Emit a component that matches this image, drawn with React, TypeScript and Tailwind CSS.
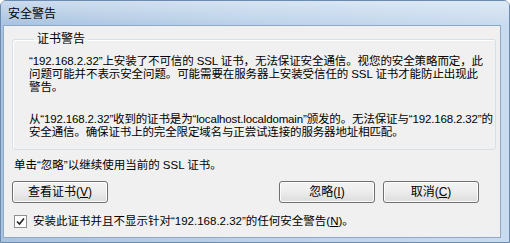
import React from 'react';

const font = { fontFamily: '"Liberation Sans", "Noto Sans CJK SC", sans-serif' };

const Btn = ({ children, className = '' }: { children: React.ReactNode; className?: string }) => (
  <button
    type="button"
    className={`h-[22px] w-[96px] border border-[#707070] rounded-[3px] bg-gradient-to-b from-[#f4f4f4] via-[#ececec] to-[#dcdcdc] text-[12px] text-black leading-none shadow-[inset_0_0_0_1px_#fcfcfc] ${className}`}
  >
    {children}
  </button>
);

export default function App() {
  return (
    <div className="w-[510px] h-[243px] overflow-hidden text-black" style={font}>
      <div className="w-full h-full flex flex-col rounded-t-[6px] border border-[#6b8bb0] bg-gradient-to-r from-[#a9c3e1] via-[#bcd2ea] to-[#c9dbef]">
        {/* title bar */}
        <div className="h-[24px] shrink-0 flex items-center pl-[7px] pt-[2px] bg-gradient-to-b from-white/40 to-transparent">
          <span className="text-[12px] leading-none">安全警告</span>
        </div>
        {/* client area */}
        <div className="flex-1 min-w-0 flex ml-[2px] mr-[8px] mb-[4px] border border-[#8ea8c6] bg-[#f0f0f0]">
          <div className="flex-1 min-w-0 flex flex-col pl-[8px] pr-[4px] pt-[6px]">
            <fieldset className="min-w-0 border border-[#d5dfe5] rounded-[3px] pl-[16px] pr-[4px] pt-[9px] h-[118px] shadow-[inset_1px_1px_0_#fff]">
              <legend className="px-[3px] ml-[5px] text-[12px] leading-[14px]">证书警告</legend>
              <p className="text-[11.5px] leading-[13px] whitespace-pre tracking-[-0.1px]">
                {'“192.168.2.32”上安装了不可信的 SSL 证书，无法保证安全通信。视您的安全策略而定，此\n问题可能并不表示安全问题。可能需要在服务器上安装受信任的 SSL 证书才能防止出现此\n警告。'}
              </p>
              <p className="mt-[19px] text-[11.5px] leading-[13px] whitespace-pre tracking-[-0.15px]">
                {'从“192.168.2.32”收到的证书是为“localhost.localdomain”颁发的。无法保证与“192.168.2.32”的\n安全通信。确保证书上的完全限定域名与正尝试连接的服务器地址相匹配。'}
              </p>
            </fieldset>
            <p className="mt-[9px] ml-[2px] text-[11.5px] leading-[13px]">单击“忽略”以继续使用当前的 SSL 证书。</p>
            <div className="mt-[9px] flex items-center">
              <Btn>查看证书(<span className="underline">V</span>)</Btn>
              <div className="flex-1" />
              <Btn>忽略(<span className="underline">I</span>)</Btn>
              <Btn className="ml-[8px] mr-[17px]">取消(<span className="underline">C</span>)</Btn>
            </div>
            <div className="mt-[12px] ml-[2px] flex items-center gap-[6px]">
              <span className="w-[13px] h-[13px] border border-[#8f8f8f] bg-white flex items-center justify-center">
                <svg width="9" height="9" viewBox="0 0 9 9">
                  <path d="M1 4.5 L3.5 7 L8 1.5" fill="none" stroke="#222" strokeWidth="1.6" />
                </svg>
              </span>
              <span className="text-[11.5px] leading-[13px]">
                安装此证书并且不显示针对“192.168.2.32”的任何安全警告(<span className="underline">N</span>)。
              </span>
            </div>
          </div>
        </div>
      </div>
    </div>
  );
}
